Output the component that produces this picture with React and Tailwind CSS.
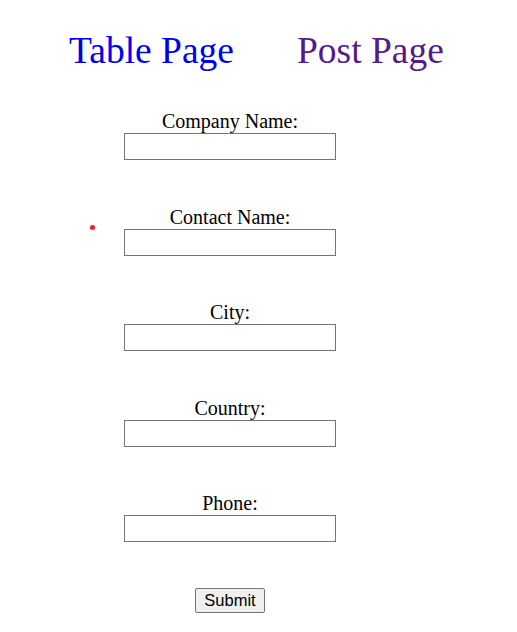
import React from "react";

const fields = ["Company Name:", "Contact Name:", "City:", "Country:", "Phone:"];

const App = () => {
  return (
    <div className="relative min-h-[632px] bg-white font-['Liberation_Serif',serif] text-black">
      <div className="flex pl-[69px] pt-[28px] text-[37.5px] leading-[46px]">
        <a href="#" className="text-[#0000ee] no-underline">
          Table Page
        </a>
        <a href="#" className="ml-[63px] text-[#551a8b] no-underline">
          Post Page
        </a>
      </div>

      <form className="mt-[36px] flex w-[460px] flex-col items-center">
        {fields.map((label) => (
          <div key={label} className="mb-[45.5px] flex flex-col items-center">
            <label className="text-[20px] leading-[23px]">{label}</label>
            <input
              type="text"
              className="h-[27px] w-[212px] border border-[#767676] bg-white"
            />
          </div>
        ))}
        <button
          type="button"
          className="h-[25px] w-[70px] rounded-[2px] border border-[#767676] bg-[#efefef] font-['Liberation_Sans',sans-serif] text-[16.5px] leading-none"
        >
          Submit
        </button>
      </form>

      <span className="absolute left-[90px] top-[225px] h-[5px] w-[5px] rounded-full bg-[#e8202a]" />
    </div>
  );
};

export default App;
